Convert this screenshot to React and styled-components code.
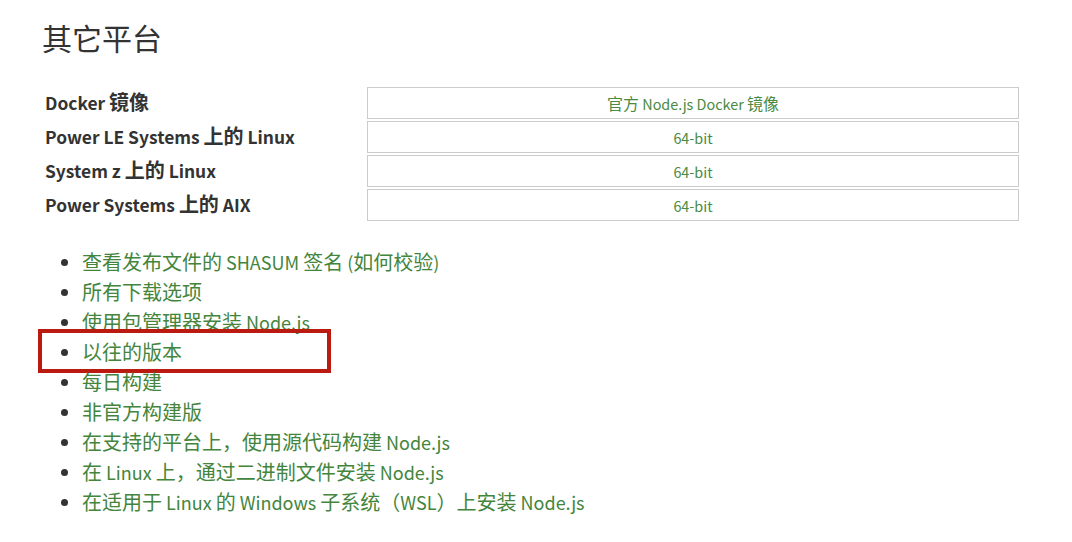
import React from 'react'
import styled, { createGlobalStyle } from 'styled-components'

const GlobalStyle = createGlobalStyle`
  html, body {
    margin: 0;
    padding: 0;
    background: #fff;
  }
  body {
    font-family: "Noto Sans CJK SC", "Noto Sans", sans-serif;
    color: #333;
  }
`

const platforms = [
  { label: 'Docker 镜像', link: '官方 Node.js Docker 镜像' },
  { label: 'Power LE Systems 上的 Linux', link: '64-bit' },
  { label: 'System z 上的 Linux', link: '64-bit' },
  { label: 'Power Systems 上的 AIX', link: '64-bit' },
]

const links = [
  '查看发布文件的 SHASUM 签名 (如何校验)',
  '所有下载选项',
  '使用包管理器安装 Node.js',
  '以往的版本',
  '每日构建',
  '非官方构建版',
  '在支持的平台上，使用源代码构建 Node.js',
  '在 Linux 上，通过二进制文件安装 Node.js',
  '在适用于 Linux 的 Windows 子系统（WSL）上安装 Node.js',
]

// latin runs are set a little smaller than the CJK ones, like the original page
const Latin = styled.span`
  font-size: ${(p) => p.$scale || 0.9}em;
`

const mixed = (text, scale) =>
  text.split(/([\u0000-\u024F]+)/).map((part, i) =>
    /^[\u0000-\u024F]+$/.test(part) ? (
      <Latin key={i} $scale={scale}>{part}</Latin>
    ) : (
      part
    )
  )

const Page = styled.div`
  padding: 19px 0 0 42px;
  width: 980px;
`

const Heading = styled.h2`
  margin: 0;
  font-size: 30px;
  line-height: 36px;
  font-weight: 400;
  color: #333;
`

const Table = styled.div`
  margin-top: 32px;
  display: grid;
  grid-template-columns: 323px 652px;
  grid-auto-rows: 32px;
  gap: 2px;
`

const Label = styled.div`
  display: flex;
  align-items: center;
  padding: 0 0 3px 3px;
  font-size: 20px;
  font-weight: 700;
  color: #333;

  span {
    white-space: pre;
  }
`

const Cell = styled.a`
  display: flex;
  align-items: center;
  justify-content: center;
  padding-bottom: 1px;
  border: 1px solid #ccc;
  font-size: 16px;
  color: #4a8a42;
  text-decoration: none;

  span {
    white-space: pre;
  }
`

const List = styled.ul`
  margin: 26px 0 0;
  padding-left: 40px;
  list-style: disc;
`

const Item = styled.li`
  position: relative;
  font-size: 20px;
  line-height: 30px;
  color: #333;

  &::marker {
    font-size: 18px;
  }

  a {
    color: #43853d;
    text-decoration: none;
    white-space: pre;
  }
`

const Highlight = styled.span`
  position: absolute;
  top: -8px;
  left: -44px;
  width: 293px;
  height: 44px;
  box-sizing: border-box;
  border: 4px solid #bb1a10;
  pointer-events: none;
`

export default function App() {
  return (
    <>
      <GlobalStyle />
      <Page>
        <Heading>其它平台</Heading>
        <Table>
          {platforms.map((p) => (
            <React.Fragment key={p.label}>
              <Label>
                <span>{mixed(p.label, 0.87)}</span>
              </Label>
              <Cell href="#">
                <span>{mixed(p.link, 0.9)}</span>
              </Cell>
            </React.Fragment>
          ))}
        </Table>
        <List>
          {links.map((text) => (
            <Item key={text}>
              <a href="#">{mixed(text, 0.9)}</a>
              {text === '以往的版本' && <Highlight />}
            </Item>
          ))}
        </List>
      </Page>
    </>
  )
}
